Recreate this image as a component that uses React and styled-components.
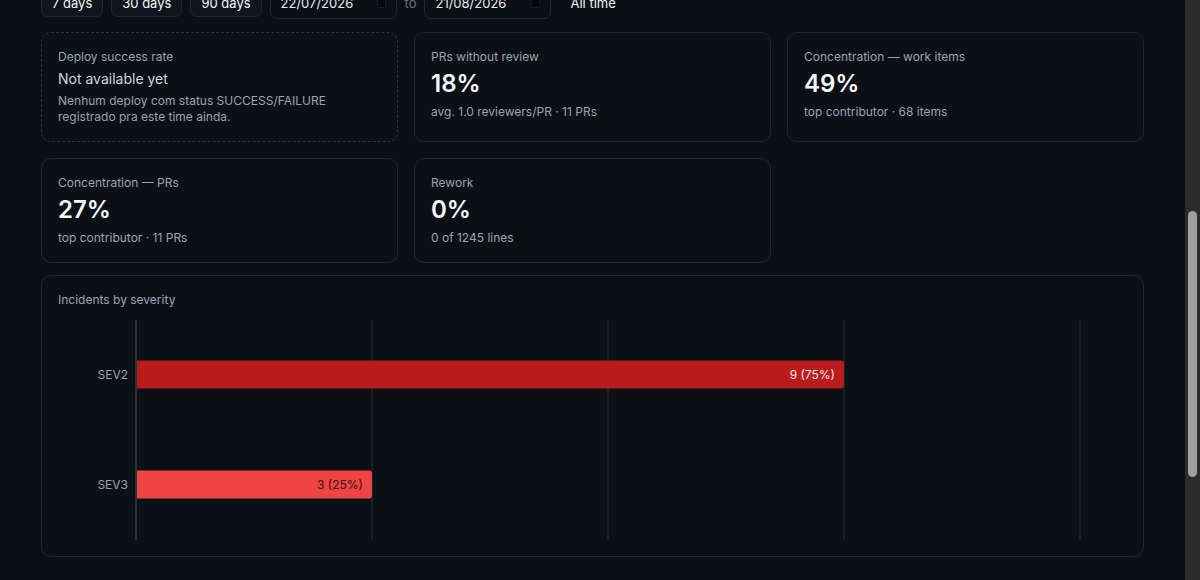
import React, { useLayoutEffect, useRef, useState } from 'react';
import styled, { createGlobalStyle } from 'styled-components';

const GlobalStyle = createGlobalStyle`
  html, body { height:100%; }
  body {
    margin:0;
    background:#0b1017;
    color:#e5e7eb;
    font-family:Inter, "Noto Sans", "Liberation Sans", sans-serif;
    overflow:hidden;
  }
  * { box-sizing:border-box; }
`;

const Shell = styled.div`
  display:flex;
  height:100vh;
`;

const Viewport = styled.div`
  flex:1;
  min-width:0;
  overflow-y:scroll;
  scrollbar-width:none;
  background:#0b1017;
  &::-webkit-scrollbar { display:none; }
`;

const ScrollTrack = styled.div`
  width:15px;
  flex-shrink:0;
  background:#2b2b2b;
  padding:0 3px;
`;

const ScrollThumb = styled.div`
  width:9px;
  border-radius:5px;
  background:#9f9f9f;
`;

const Nav = styled.header`
  height:56px;
  border-bottom:1px solid #1e2632;
  display:flex;
  align-items:center;
  padding:0 41px;
  font-size:14px;
  font-weight:600;
  color:#f3f4f6;
`;

const Main = styled.main`
  padding:28px 41px 40px;
`;

const PageTitle = styled.h1`
  margin:0;
  font-size:24px;
  line-height:32px;
  font-weight:600;
  color:#f3f4f6;
`;

const Subtitle = styled.p`
  margin:4px 0 0;
  font-size:14px;
  line-height:20px;
  color:#9aa3b2;
`;

const Tabs = styled.nav`
  margin-top:20px;
  height:40px;
  display:flex;
  gap:24px;
  align-items:center;
  border-bottom:1px solid #1e2632;
  font-size:13px;
`;

const Tab = styled.span`
  color:${p => (p.$active ? '#f3f4f6' : '#9aa3b2')};
`;

const Panel = styled.section`
  margin-top:${p => p.$mt || 0}px;
  min-height:${p => p.$h || 0}px;
  border:1px solid #1e2632;
  border-radius:10px;
  padding:16px;
`;

const FilterRow = styled.div`
  margin-top:16px;
  height:28px;
  display:flex;
  align-items:center;
  gap:8px;
`;

const RangeButton = styled.button`
  height:28px;
  padding:0 10px;
  border-radius:7px;
  border:1px solid ${p => (p.$ghost ? 'transparent' : '#1f2733')};
  background:${p => (p.$ghost ? 'transparent' : '#0f151f')};
  color:#f3f4f6;
  font-family:inherit;
  font-size:13px;
  cursor:pointer;
`;

const DateField = styled.div`
  width:127px;
  height:32px;
  padding:0 10px;
  border:1px solid #1f2733;
  border-radius:7px;
  background:#0b1017;
  display:flex;
  align-items:center;
  justify-content:space-between;
  font-size:13px;
  color:#e5e7eb;
`;

const PickerIcon = styled.span`
  width:9px;
  height:10px;
  border-radius:1px;
  background:#05070b;
  border:1px solid #151a22;
`;

const ToLabel = styled.span`
  font-size:13px;
  color:#6b7280;
`;

const CardGrid = styled.div`
  margin-top:15px;
  display:grid;
  grid-template-columns:repeat(3, 1fr);
  gap:16px;
`;

const Card = styled.div`
  border:1px ${p => (p.$dashed ? 'dashed #2a3340' : 'solid #1e2632')};
  border-radius:10px;
  padding:16px;
  background:#0b1017;
`;

const Label = styled.div`
  font-size:12px;
  line-height:16px;
  color:#9aa3b2;
`;

const Value = styled.div`
  margin-top:5px;
  font-size:24px;
  line-height:28px;
  font-weight:600;
  color:#f9fafb;
`;

const Pending = styled.div`
  margin-top:4px;
  font-size:14px;
  line-height:20px;
  color:#d1d5db;
`;

const Sub = styled.div`
  margin-top:${p => (p.$tight ? 4 : 6)}px;
  font-size:12px;
  line-height:16px;
  color:#9aa3b2;
`;

const ChartCard = styled(Card)`
  margin-top:12px;
`;

const ChartBox = styled.div`
  margin-top:12px;
  height:220px;
  svg { display:block; width:100%; height:100%; }
  text { font-family:Inter, "Noto Sans", "Liberation Sans", sans-serif; font-size:12px; }
`;

const incidents = [
  { sev: 'SEV2', count: 9, pct: 75, color: '#b91c1c', text: '#fde8e8' },
  { sev: 'SEV3', count: 3, pct: 25, color: '#ef4444', text: '#3a1010' },
];

const X0 = 78;
const STEP = 236;
const MAX = 12;
const BAND = 110;
const BAR_H = 28;

const barPath = (x, y, w, h, r) =>
  `M${x},${y} H${x + w - r} Q${x + w},${y} ${x + w},${y + r} V${y + h - r} Q${x + w},${y + h} ${x + w - r},${y + h} H${x} Z`;

const SeverityChart = () => (
  <ChartBox>
    <svg viewBox="0 0 1069 220" preserveAspectRatio="none">
      {[1, 2, 3, 4].map(k => (
        <line key={k} x1={X0 + STEP * k} x2={X0 + STEP * k} y1={0} y2={220} stroke="#181d26" strokeWidth="2" />
      ))}
      {incidents.map((d, i) => {
        const w = (d.count / MAX) * STEP * 4;
        const y = i * BAND + (BAND - BAR_H) / 2 - 0.5;
        return (
          <g key={d.sev}>
            <text x={X0 - 8} y={y + BAR_H / 2 + 4} textAnchor="end" fill="#9aa3b2">{d.sev}</text>
            <path d={barPath(X0, y, w, BAR_H, 3)} fill={d.color} />
            <text x={X0 + w - 9} y={y + BAR_H / 2 + 4} textAnchor="end" fill={d.text}>
              {`${d.count} (${d.pct}%)`}
            </text>
          </g>
        );
      })}
      <line x1={X0} x2={X0} y1={0} y2={220} stroke="#2b313b" strokeWidth="2" />
    </svg>
  </ChartBox>
);

const App = () => {
  const scroller = useRef(null);
  const [thumb, setThumb] = useState({ top: 211, height: 265 });

  useLayoutEffect(() => {
    const el = scroller.current;
    if (!el) return;
    el.scrollTop = 462;
    const update = () => {
      const ratio = el.clientHeight / el.scrollHeight;
      setThumb({ top: el.scrollTop * ratio, height: el.clientHeight * ratio });
    };
    update();
    el.addEventListener('scroll', update);
    return () => el.removeEventListener('scroll', update);
  }, []);

  return (
    <>
      <GlobalStyle />
      <Shell>
        <Viewport ref={scroller}>
          <Nav>Engineering metrics</Nav>
          <Main>
            <PageTitle>Team metrics</PageTitle>
            <Subtitle>Delivery and quality indicators for the selected period.</Subtitle>
            <Tabs>
              <Tab $active>Overview</Tab>
              <Tab>Delivery</Tab>
              <Tab>Quality</Tab>
            </Tabs>
            <Panel $mt={20} $h={215}>
              <Label>Summary</Label>
            </Panel>

            <FilterRow>
              <RangeButton>7 days</RangeButton>
              <RangeButton>30 days</RangeButton>
              <RangeButton>90 days</RangeButton>
              <DateField>22/07/2026<PickerIcon /></DateField>
              <ToLabel>to</ToLabel>
              <DateField>21/08/2026<PickerIcon /></DateField>
              <RangeButton $ghost>All time</RangeButton>
            </FilterRow>

            <CardGrid>
              <Card $dashed>
                <Label>Deploy success rate</Label>
                <Pending>Not available yet</Pending>
                <Sub $tight>Nenhum deploy com status SUCCESS/FAILURE registrado pra este time ainda.</Sub>
              </Card>
              <Card>
                <Label>PRs without review</Label>
                <Value>18%</Value>
                <Sub>avg. 1.0 reviewers/PR · 11 PRs</Sub>
              </Card>
              <Card>
                <Label>Concentration — work items</Label>
                <Value>49%</Value>
                <Sub>top contributor · 68 items</Sub>
              </Card>
              <Card>
                <Label>Concentration — PRs</Label>
                <Value>27%</Value>
                <Sub>top contributor · 11 PRs</Sub>
              </Card>
              <Card>
                <Label>Rework</Label>
                <Value>0%</Value>
                <Sub>0 of 1245 lines</Sub>
              </Card>
            </CardGrid>

            <ChartCard>
              <Label>Incidents by severity</Label>
              <SeverityChart />
            </ChartCard>

            <Panel $mt={28} $h={181}>
              <Label>Recent incidents</Label>
            </Panel>
          </Main>
        </Viewport>
        <ScrollTrack>
          <ScrollThumb style={{ marginTop: thumb.top, height: thumb.height }} />
        </ScrollTrack>
      </Shell>
    </>
  );
};

export default App;
